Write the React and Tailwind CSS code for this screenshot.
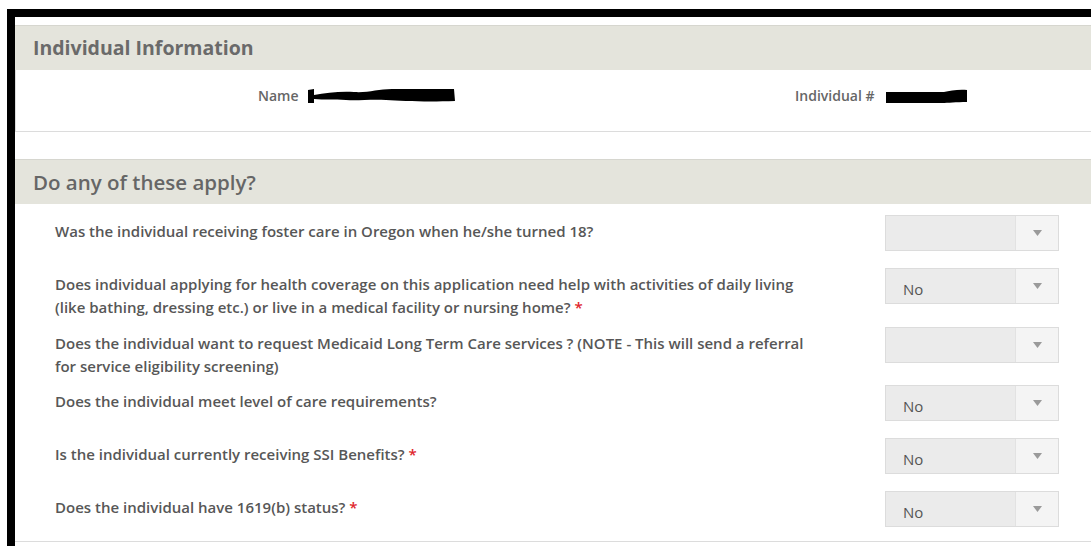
import React from "react";

const questions = [
  {
    text: "Was the individual receiving foster care in Oregon when he/she turned 18?",
    value: "",
    required: false,
    row: "h-[53px]",
  },
  {
    text: "Does individual applying for health coverage on this application need help with activities of daily living (like bathing, dressing etc.) or live in a medical facility or nursing home?",
    value: "No",
    required: true,
    row: "h-[59px]",
  },
  {
    text: "Does the individual want to request Medicaid Long Term Care services ? (NOTE - This will send a referral for service eligibility screening)",
    value: "",
    required: false,
    row: "h-[58px]",
  },
  {
    text: "Does the individual meet level of care requirements?",
    value: "No",
    required: false,
    row: "h-[53px]",
  },
  {
    text: "Is the individual currently receiving SSI Benefits?",
    value: "No",
    required: true,
    row: "h-[53px]",
  },
  {
    text: "Does the individual have 1619(b) status?",
    value: "No",
    required: true,
    row: "h-[50px]",
  },
];

function Select({ value }) {
  return (
    <div className="flex h-[36px] w-[174px] shrink-0 border border-[#dcdcdc] bg-[#ebebeb]">
      <div className="flex flex-1 items-center pl-[17px] pt-[6px] text-[15px] text-[#555] font-['Open_Sans',sans-serif]">
        {value}
      </div>
      <div className="flex w-[43px] items-center justify-center border-l border-[#e2e2e2] bg-[#f4f4f4]">
        <svg width="9" height="6" viewBox="0 0 9 6">
          <path d="M0 0 H9 L4.5 6 Z" fill="#9a9a9a" />
        </svg>
      </div>
    </div>
  );
}

function Redacted({ kind }) {
  if (kind === "name") {
    return (
      <svg width="150" height="18" viewBox="0 0 150 18" className="block">
        <path
          d="M2 3 L8 2 L8 8 C20 6 34 4 48 5 C62 6 72 2 86 2 L148 2 L149 14 C120 15 96 14 80 13 C64 12 52 14 40 13 C28 12 18 13 8 12 L8 16 L2 16 Z"
          fill="#000"
        />
      </svg>
    );
  }
  return (
    <svg width="82" height="15" viewBox="0 0 82 15" className="block">
      <path d="M0 3 L58 3 C64 2 72 0 81 1 L81 13 C70 13 62 14 56 14 L0 14 Z" fill="#000" />
    </svg>
  );
}

export default function App() {
  return (
    <div className="h-[546px] w-[1091px] overflow-hidden bg-white pl-[7px] pt-[9px] font-['Open_Sans',sans-serif]">
      <div className="h-full border-l-[8px] border-t-[8px] border-black pt-[8px]">
        {/* Individual Information */}
        <div className="flex h-[45px] items-center border-t border-[#d6d6cf] bg-[#e4e4dc] pl-[18px] text-[19.5px] font-bold text-[#6a6a6a]">
          Individual Information
        </div>
        <div className="flex h-[62px] items-start border-b border-l border-[#dcdcdc] pl-[242px] pt-[16px] text-[14px] font-semibold leading-[20px] text-[#666]">
          <div className="flex h-[20px] w-[537px] items-center gap-[7px]">
            <span>Name</span>
            <Redacted kind="name" />
          </div>
          <div className="flex h-[20px] items-center gap-[12px]">
            <span>Individual #</span>
            <Redacted kind="id" />
          </div>
        </div>

        <div className="h-[27px]" />

        {/* Do any of these apply? */}
        <div className="flex h-[45px] items-center border-t border-[#d6d6cf] bg-[#e4e4dc] pl-[18px] text-[20.5px] font-semibold text-[#666]">
          Do any of these apply?
        </div>
        <div className="border-b border-[#dcdcdc] pt-[11px]">
          {questions.map((q, i) => (
            <div key={i} className={`flex items-start ${q.row}`}>
              <div className="w-[870px] shrink-0 pl-[40px] pt-[5px] text-[15px] font-semibold leading-[23px] text-[#575757]">
                <div className="w-[755px]">
                  {q.text}
                  {q.required && <span className="text-[#e0242b]"> *</span>}
                </div>
              </div>
              <Select value={q.value} />
            </div>
          ))}
        </div>
      </div>
    </div>
  );
}
